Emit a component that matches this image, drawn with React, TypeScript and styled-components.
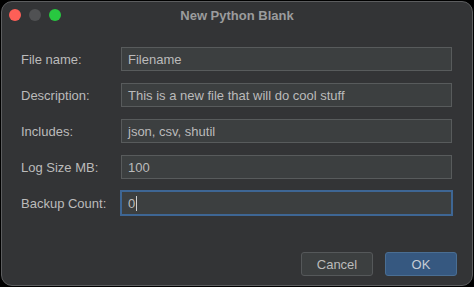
import React from 'react'
import styled, { createGlobalStyle } from 'styled-components'

const GlobalStyle = createGlobalStyle`
  html, body {
    margin: 0;
    padding: 0;
    background: #000;
  }
  body {
    font-family: 'Liberation Sans', Arial, sans-serif;
  }
`

const fields = [
  { label: 'File name:', value: 'Filename' },
  { label: 'Description:', value: 'This is a new file that will do cool stuff' },
  { label: 'Includes:', value: 'json, csv, shutil' },
  { label: 'Log Size MB:', value: '100' },
  { label: 'Backup Count:', value: '0', focused: true },
]

const Window = styled.div`
  box-sizing: border-box;
  width: 472px;
  height: 285px;
  margin: 1px 0 0 1px;
  background: #333436;
  border: 1px solid #5c5d5f;
  border-radius: 11px;
  display: flex;
  flex-direction: column;
  overflow: hidden;
`

const TitleBar = styled.div`
  position: relative;
  height: 27px;
  display: flex;
  align-items: center;
  justify-content: center;
`

const Lights = styled.div`
  position: absolute;
  left: 7px;
  top: 7px;
  display: flex;
  gap: 8px;
`

const Light = styled.span<{ color: string }>`
  width: 12px;
  height: 12px;
  border-radius: 50%;
  background: ${props => props.color};
`

const Title = styled.div`
  font-size: 13px;
  font-weight: bold;
  color: #9b9c9d;
`

const Form = styled.div`
  display: flex;
  flex-direction: column;
  gap: 12px;
  padding: 18px 20px 0 19px;
`

const Row = styled.div`
  display: flex;
  align-items: center;
  height: 24px;
`

const Label = styled.div`
  width: 100px;
  font-size: 13px;
  color: #bbbbbb;
`

const Field = styled.div<{ focused?: boolean }>`
  box-sizing: border-box;
  flex: 1;
  height: ${props => (props.focused ? '26px' : '24px')};
  margin: ${props => (props.focused ? '0 -1px' : '0')};
  display: flex;
  align-items: center;
  padding-left: 6px;
  background: #3c3f40;
  border: ${props => (props.focused ? '2px solid #3e6694' : '1px solid #585b5c')};
  font-size: 13px;
  color: #bbbbbb;
`

const Caret = styled.span`
  display: inline-block;
  width: 1px;
  height: 15px;
  margin-left: 1px;
  background: #cfcfcf;
`

const Footer = styled.div`
  margin-top: auto;
  display: flex;
  justify-content: flex-end;
  gap: 12px;
  padding: 0 15px 9px 0;
`

const Button = styled.div<{ primary?: boolean }>`
  box-sizing: border-box;
  width: 72px;
  height: 24px;
  display: flex;
  align-items: center;
  justify-content: center;
  border-radius: 3px;
  font-size: 13px;
  color: ${props => (props.primary ? '#c6cdd5' : '#bbbbbb')};
  background: ${props => (props.primary ? '#365880' : '#3c3f40')};
  border: 1px solid ${props => (props.primary ? '#4a6e93' : '#55585a')};
`

const App: React.FC = () => (
  <>
    <GlobalStyle />
    <Window>
      <TitleBar>
        <Lights>
          <Light color="#fe5f57" />
          <Light color="#505153" />
          <Light color="#28c840" />
        </Lights>
        <Title>New Python Blank</Title>
      </TitleBar>
      <Form>
        {fields.map(field => (
          <Row key={field.label}>
            <Label>{field.label}</Label>
            <Field focused={field.focused}>
              {field.value}
              {field.focused && <Caret />}
            </Field>
          </Row>
        ))}
      </Form>
      <Footer>
        <Button>Cancel</Button>
        <Button primary>OK</Button>
      </Footer>
    </Window>
  </>
)

export default App
